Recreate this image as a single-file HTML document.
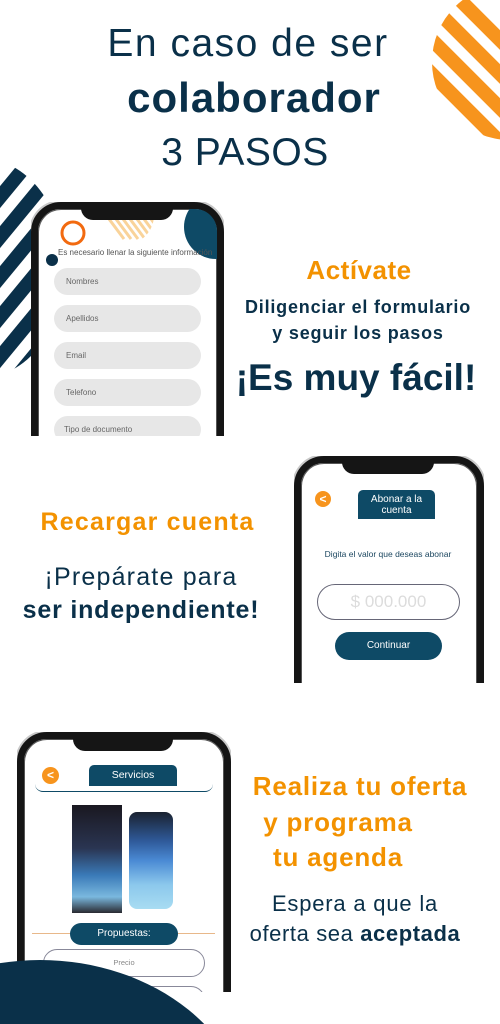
<!DOCTYPE html>
<html><head><meta charset="utf-8"><style>
*{margin:0;padding:0;box-sizing:border-box}
html,body{width:500px;height:1024px;overflow:hidden}
body{position:relative;background:#fff;font-family:"Liberation Sans",sans-serif;color:#0a3049}
.a{position:absolute}
.c{text-align:center;white-space:nowrap}
.phone{position:absolute;overflow:hidden}
.frame{position:absolute;left:0;top:0;right:0;height:400px;border:7px solid #151515;border-radius:30px;box-shadow:0 0 0 2px #c9c9c9, inset 0 0 0 1px #555;background:#fff}
.notch{position:absolute;top:0;height:18px;background:#151515;border-radius:0 0 12px 12px}
.inp{position:absolute;background:#e7e7e7;border-radius:14px;font-size:8px;color:#666;padding-left:12px;line-height:27px;height:27px}
.orange{color:#f39200;font-weight:bold}
</style></head><body>

<svg class="a" style="left:0;top:0" width="500" height="1024">
<defs>
<clipPath id="oc"><circle cx="510" cy="62" r="78"/></clipPath>
<clipPath id="nc"><ellipse cx="-20" cy="268" rx="85" ry="110"/></clipPath>
</defs>
<g clip-path="url(#oc)" stroke="#f7941d" stroke-width="14">
<line x1="400" y1="-60" x2="560" y2="100"/>
<line x1="400" y1="-26" x2="560" y2="134"/>
<line x1="400" y1="8" x2="560" y2="168"/>
<line x1="400" y1="42" x2="560" y2="202"/>
<line x1="400" y1="76" x2="560" y2="236"/>
<line x1="400" y1="110" x2="560" y2="270"/>
</g>
<g clip-path="url(#nc)" stroke="#0a3049" stroke-width="14">
<line x1="-60" y1="270" x2="80" y2="100"/>
<line x1="-60" y1="310" x2="80" y2="140"/>
<line x1="-60" y1="350" x2="80" y2="180"/>
<line x1="-60" y1="390" x2="80" y2="220"/>
<line x1="-60" y1="430" x2="80" y2="260"/>
<line x1="-60" y1="470" x2="80" y2="300"/>
</g>
</svg>

<div class="a c" style="left:0;width:496px;top:22px;font-size:39px;letter-spacing:1.5px">En caso de ser</div>
<div class="a c" style="left:0;width:508px;top:74px;font-size:42px;font-weight:bold;letter-spacing:1px">colaborador</div>
<div class="a c" style="left:0;width:490px;top:131px;font-size:39px;letter-spacing:0.5px">3 PASOS</div>

<!-- Phone 1 -->
<div class="phone" style="left:31px;top:202px;width:193px;height:234px">
 <div class="frame"></div>
 <svg class="a" style="left:7px;top:7px" width="179" height="230">
  <defs><clipPath id="s1"><rect width="179" height="230" rx="22"/></clipPath>
  <clipPath id="hs"><circle cx="86" cy="6" r="30"/></clipPath></defs>
  <g clip-path="url(#s1)">
   <circle cx="178" cy="18" r="32" fill="#0e4a66"/>
   <g clip-path="url(#hs)" stroke="#f9d39a" stroke-width="3"><line x1="56" y1="-10" x2="86" y2="30"/><line x1="63" y1="-10" x2="93" y2="30"/><line x1="70" y1="-10" x2="100" y2="30"/><line x1="77" y1="-10" x2="107" y2="30"/><line x1="84" y1="-10" x2="114" y2="30"/><line x1="91" y1="-10" x2="121" y2="30"/><line x1="98" y1="-10" x2="128" y2="30"/></g>
   <circle cx="35" cy="24" r="11" fill="none" stroke="#f26a10" stroke-width="3"/>
   <circle cx="14" cy="51" r="6" fill="#0a3049"/>
  </g>
 </svg>
 <div class="notch" style="left:50px;width:92px"></div>
 <div class="a" style="left:27px;top:46px;font-size:8px;color:#555;white-space:nowrap">Es necesario llenar la siguiente información</div>
 <div class="inp" style="left:23px;top:66px;width:147px">Nombres</div>
 <div class="inp" style="left:23px;top:103px;width:147px">Apellidos</div>
 <div class="inp" style="left:23px;top:140px;width:147px">Email</div>
 <div class="inp" style="left:23px;top:177px;width:147px">Telefono</div>
 <div class="inp" style="left:23px;top:214px;width:147px;padding-left:10px">Tipo de documento</div>
</div>

<div class="a c orange" style="left:230px;width:258px;top:255px;font-size:26px;letter-spacing:0.5px">Actívate</div>
<div class="a c" style="left:230px;width:256px;top:297px;font-size:18px;font-weight:bold;letter-spacing:0.8px">Diligenciar el formulario</div>
<div class="a c" style="left:230px;width:256px;top:323px;font-size:18px;font-weight:bold;letter-spacing:0.8px">y seguir los pasos</div>
<div class="a c" style="left:228px;width:256px;top:357px;font-size:37px;font-weight:bold">¡Es muy fácil!</div>

<!-- Phone 2 -->
<div class="phone" style="left:294px;top:456px;width:190px;height:227px">
 <div class="frame"></div>
 <div class="notch" style="left:48px;width:92px"></div>
 <div class="a" style="left:21px;top:35px;width:16px;height:16px;border-radius:50%;background:#f7941d;color:#fff;font-size:12px;font-weight:bold;text-align:center;line-height:16px">&lt;</div>
 <div class="a c" style="left:64px;top:34px;width:77px;height:29px;background:#0e4a66;border-radius:5px 5px 0 0;color:#fff;font-size:10px;line-height:11px;padding-top:4px">Abonar a la<br>cuenta</div>
 <div class="a c" style="left:0;width:188px;top:93px;font-size:8.5px;color:#1c4760">Digita el valor que deseas abonar</div>
 <div class="a c" style="left:23px;top:128px;width:143px;height:36px;border:1px solid #667;border-radius:18px;font-size:17px;color:#dcdcdc;line-height:34px">$ 000.000</div>
 <div class="a c" style="left:41px;top:176px;width:107px;height:28px;background:#0e4a66;border-radius:14px;color:#fff;font-size:10px;line-height:28px">Continuar</div>
</div>

<div class="a c orange" style="left:20px;width:255px;top:508px;font-size:25px;letter-spacing:1.2px">Recargar cuenta</div>
<div class="a c" style="left:10px;width:262px;top:563px;font-size:25px;letter-spacing:1.2px">¡Prepárate para</div>
<div class="a c" style="left:10px;width:262px;top:596px;font-size:25px;font-weight:bold;letter-spacing:0.8px">ser independiente!</div>

<!-- Phone 3 -->
<div class="phone" style="left:17px;top:732px;width:214px;height:260px">
 <div class="frame" style="height:420px"></div>
 <div class="notch" style="left:56px;width:100px;height:19px"></div>
 <div class="a" style="left:25px;top:35px;width:17px;height:17px;border-radius:50%;background:#f7941d;color:#fff;font-size:12px;font-weight:bold;text-align:center;line-height:17px">&lt;</div>
 <div class="a c" style="left:72px;top:33px;width:88px;height:21px;background:#0e4a66;border-radius:5px 5px 0 0;color:#fff;font-size:10.5px;line-height:21px">Servicios</div>
 <div class="a" style="left:18px;top:52px;width:178px;height:8px;border-bottom:1.5px solid #0e4a66;border-radius:0 0 8px 8px"></div>
 <div class="a" style="left:55px;top:73px;width:50px;height:108px;background:linear-gradient(#1a1820 0%,#2a3552 40%,#3a7ab8 65%,#7ab8de 85%,#2a2a30 100%)"></div>
 <div class="a" style="left:112px;top:80px;width:44px;height:97px;border-radius:8px;background:linear-gradient(#1a2230 0%,#2f5a9a 30%,#4a8ad4 50%,#8cc8ec 75%,#a8dcf2 100%)"></div>
 <div class="a" style="left:15px;top:201px;width:183px;height:1px;background:#e8b88a"></div>
 <div class="a c" style="left:53px;top:191px;width:108px;height:22px;background:#0e4a66;border-radius:11px;color:#fff;font-size:10px;line-height:22px">Propuestas:</div>
 <div class="a c" style="left:26px;top:217px;width:162px;height:28px;border:1px solid #889;border-radius:14px;color:#888;font-size:7.5px;line-height:26px">Precio</div>
 <div class="a" style="left:26px;top:254px;width:162px;height:28px;border:1px solid #889;border-radius:14px"></div>
</div>

<svg class="a" style="left:0;top:900px" width="500" height="124"><ellipse cx="40" cy="230" rx="210" ry="170" fill="#0a3049"/></svg>

<div class="a c orange" style="left:232px;width:256px;top:771px;font-size:26px;letter-spacing:0.8px">Realiza tu oferta</div>
<div class="a c orange" style="left:230px;width:216px;top:807px;font-size:26px;letter-spacing:0.8px">y programa</div>
<div class="a c orange" style="left:230px;width:216px;top:842px;font-size:26px;letter-spacing:0.8px">tu agenda</div>
<div class="a c" style="left:228px;width:254px;top:891px;font-size:22px;letter-spacing:0.8px">Espera a que la</div>
<div class="a c" style="left:228px;width:254px;top:921px;font-size:22px;letter-spacing:0.6px">oferta sea <b>aceptada</b></div>
</body></html>
